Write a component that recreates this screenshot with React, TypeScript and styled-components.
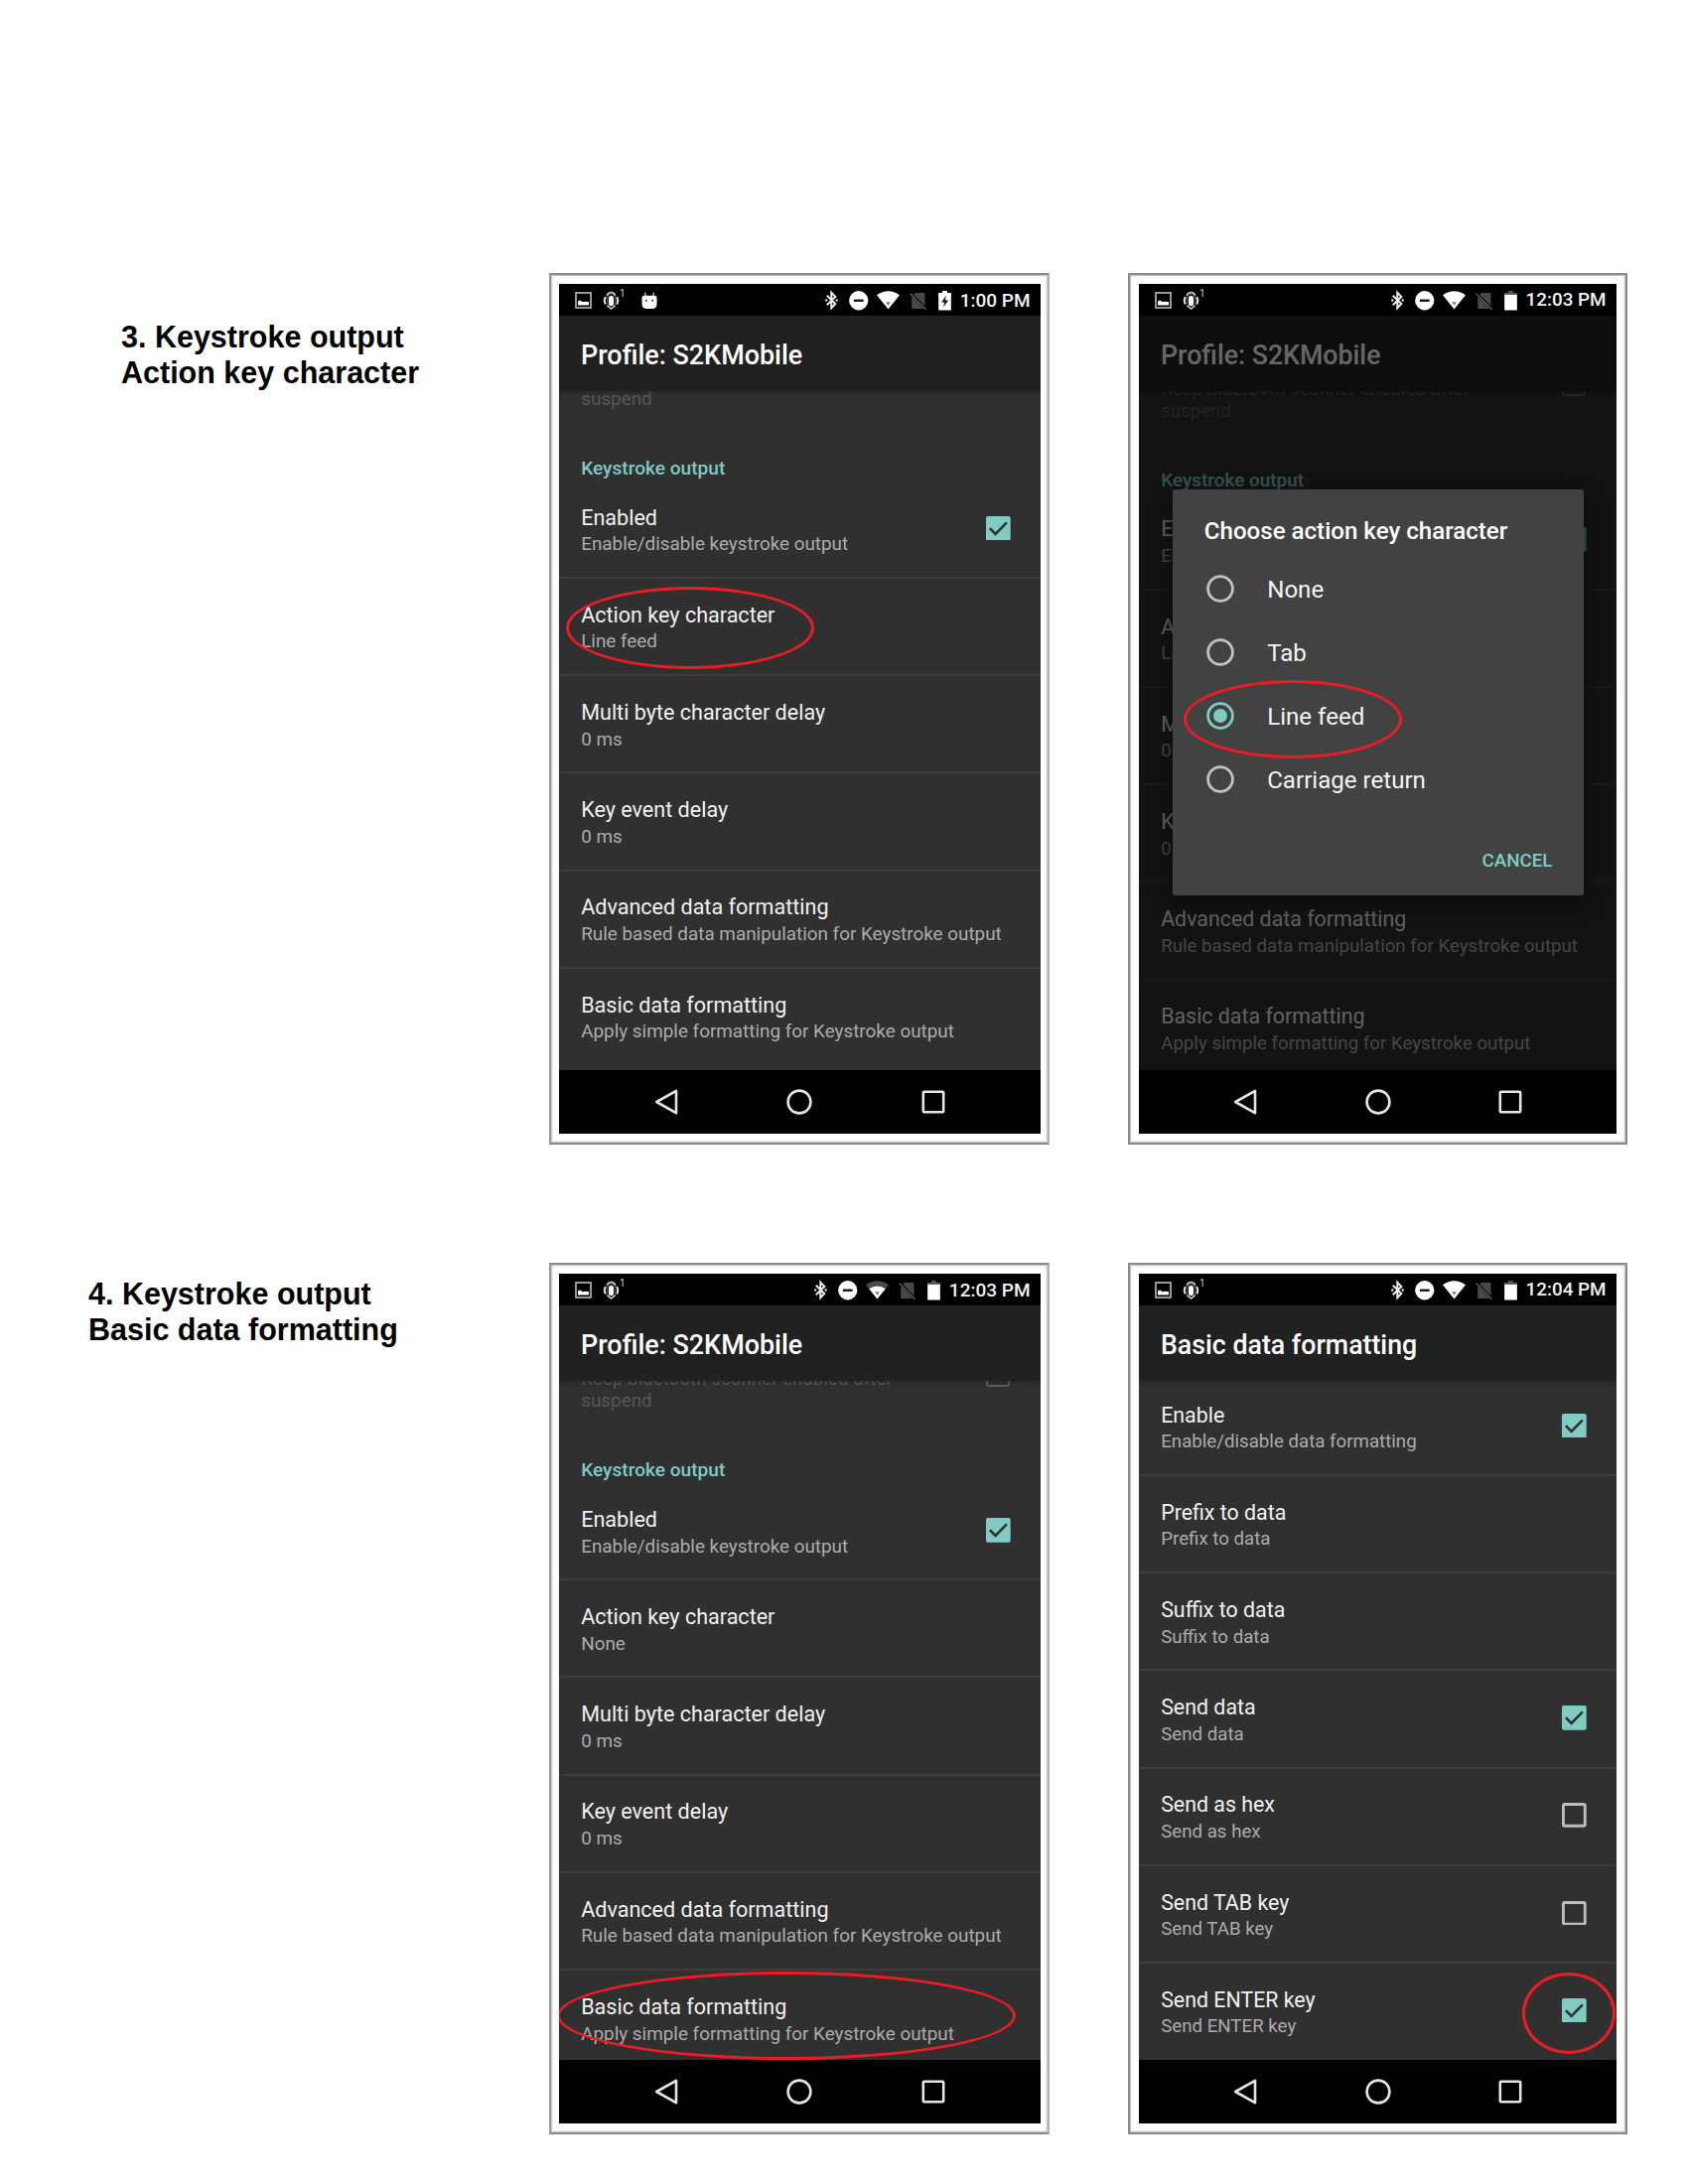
import React from "react";
import styled, { createGlobalStyle } from "styled-components";

const ACCENT = "#80cbc4";
const MARK = "#ed1c24";

const GlobalStyle = createGlobalStyle`
  *, *::before, *::after { box-sizing: border-box; }
  html, body { margin: 0; padding: 0; background: #fff; }
  body { width: 1700px; height: 2200px; overflow: hidden; }
`;

const Page = styled.main`
  display: grid;
  grid-template-columns: 553px 583px 564px;
  grid-template-rows: 997px 928px;
  width: 1700px;
  height: 2200px;
  padding-top: 275px;
  background: #fff;
`;

const Caption = styled.h2<{ $left: number; $top: number }>`
  margin: 0;
  padding: ${(p) => p.$top}px 0 0 ${(p) => p.$left}px;
  font: 700 30.5px/36px "Liberation Sans", Arial, sans-serif;
  color: #000;
  white-space: nowrap;
`;

const Frame = styled.section<{ $wide: boolean }>`
  position: relative;
  justify-self: start;
  align-self: start;
  padding: ${(p) => (p.$wide ? "9px 7px 9px 8px" : "9px 8.5px 9px 9px")};
  border: 2px solid #8a8a8a;
  border-color: ${(p) => (p.$wide ? "#8a8a8a #b4b4b4 #8a8a8a #9a9a9a" : "#8a8a8a")};
  background: #fff;
  box-shadow: inset 0 0 0 1px #c6c6c6, inset 0 0 5px rgba(0, 0, 0, 0.16);
`;

const Screen = styled.div<{ $wide: boolean }>`
  position: relative;
  display: flex;
  flex-direction: column;
  width: ${(p) => (p.$wide ? 485 : 481)}px;
  height: 856px;
  overflow: hidden;
  background: #000;
  font-family: Roboto, sans-serif;
  --k: ${(p) => (p.$wide ? 1 : 0.992)};
`;

const StatusBar = styled.div`
  display: flex;
  flex: none;
  align-items: center;
  justify-content: space-between;
  height: 32px;
  padding: 1px 10.5px 0 16px;
  color: #f2f2f2;
`;

const StatusGroup = styled.div`
  display: flex;
  align-items: center;
  height: 100%;
`;

const StatusIcon = styled.svg<{ $gap?: number }>`
  display: block;
  flex: none;
  margin-left: ${(p) => p.$gap ?? 0}px;
  overflow: visible;
`;

const Count = styled.sup`
  align-self: flex-start;
  margin: 4px 0 0 1px;
  width: 5px;
  font-size: 10px;
  line-height: 10px;
  color: #ccc;
`;

const Clock = styled.span`
  margin-left: 9px;
  font-size: calc(19px * var(--k));
  font-weight: 500;
  line-height: 31px;
`;

const Body = styled.div`
  position: relative;
  display: flex;
  flex-direction: column;
  flex: none;
  height: 760px;
  background: #303030;
`;

const Header = styled.header`
  position: relative;
  z-index: 1;
  flex: none;
  height: 76px;
  padding: 2px 22px 0;
  background: #212121;
  box-shadow: 0 1px 4px rgba(0, 0, 0, 0.3);
  color: #fff;
  font-size: calc(26.95px * var(--k));
  font-weight: 500;
  line-height: 76px;
  white-space: nowrap;
`;

const List = styled.div`
  flex: 1;
  min-height: 0;
  overflow: hidden;
`;

const ListContent = styled.div<{ $scroll: number }>`
  display: flex;
  flex-direction: column;
  margin-top: ${(p) => -p.$scroll}px;
`;

const DisabledItem = styled.div`
  display: flex;
  justify-content: space-between;
  height: 44px;
  padding: 0 31px 0 22.2px;
  color: #575757;
  font-size: calc(18.86px * var(--k));
  line-height: 22px;
`;

const DisabledBox = styled.span`
  flex: none;
  width: 24.5px;
  height: 24.5px;
  margin-top: -6px;
  border: 2.5px solid #5c5c5c;
  border-radius: 3px;
`;

const Category = styled.h3`
  margin: 46.8px 0 0;
  padding: 0 22.2px;
  color: ${ACCENT};
  font-size: calc(19.1px * var(--k));
  font-weight: 500;
  line-height: 23px;
`;

const Row = styled.div<{ $first: boolean }>`
  display: flex;
  flex: none;
  justify-content: space-between;
  height: 98.2px;
  padding: 0 30.5px 0 22.2px;
  border-top: 2px solid ${(p) => (p.$first ? "transparent" : "#3d3d3d")};
`;

const RowText = styled.div`
  padding-top: 22.8px;
  white-space: nowrap;
`;

const RowTitle = styled.div`
  color: #f1f1f1;
  font-size: calc(21.55px * var(--k));
  line-height: 27px;
`;

const RowSummary = styled.div`
  margin-top: 2.7px;
  color: #acacac;
  font-size: calc(18.86px * var(--k));
  line-height: 22px;
`;

const Check = styled.svg`
  flex: none;
  align-self: center;
  display: block;
  margin-bottom: 2px;
`;

const NavBar = styled.nav`
  display: flex;
  flex: none;
  justify-content: center;
  align-items: center;
  height: 64px;
  background: #000;
`;

const NavCell = styled.span`
  display: flex;
  justify-content: center;
  width: calc(134.8px * var(--k));
`;

const Scrim = styled.div`
  position: absolute;
  inset: 0;
  z-index: 2;
  background: rgba(0, 0, 0, 0.6);
`;

const Dialog = styled.div`
  position: absolute;
  z-index: 3;
  top: 175px;
  left: 34px;
  display: flex;
  flex-direction: column;
  width: 413.5px;
  height: 409px;
  padding: 0 31px 0 31.8px;
  border-radius: 3px;
  background: #424242;
  box-shadow: 0 8px 22px rgba(0, 0, 0, 0.5);
`;

const DialogTitle = styled.div`
  padding-top: 26px;
  color: #fff;
  font-size: 24.1px;
  font-weight: 500;
  line-height: 33px;
  white-space: nowrap;
`;

const Options = styled.div`
  display: flex;
  flex-direction: column;
  margin-top: 9.5px;
`;

const Option = styled.div`
  display: flex;
  align-items: center;
  gap: 33px;
  height: 64.2px;
  padding-left: 2.4px;
  color: #f4f4f4;
  font-size: 24.1px;
  line-height: 64px;

  svg { display: block; margin-top: -2px; }
`;

const CancelButton = styled.button`
  align-self: flex-end;
  margin: 36.500px 0 0;
  padding: 0;
  border: 0;
  background: none;
  color: ${ACCENT};
  font: 500 18.75px/24px Roboto, sans-serif;
`;

const Marker = styled.span<{ $x: number; $y: number; $w: number; $h: number }>`
  position: absolute;
  z-index: 4;
  left: ${(p) => p.$x}px;
  top: ${(p) => p.$y}px;
  width: ${(p) => p.$w}px;
  height: ${(p) => p.$h}px;
  border: 3px solid ${MARK};
  border-radius: 50%;
`;

const ImageIcon = () => (
  <StatusIcon width="17" height="17" viewBox="0 0 17 17">
    <rect x="1" y="1" width="15" height="15" fill="none" stroke="#a8a8a8" strokeWidth="1.8" />
    <path d="M3 13.6V9.6l2.2-1 2.6 1.7 2.2-.6 4 .4v3.5z" fill="#fff" />
  </StatusIcon>
);

const ScannerIcon = () => (
  <StatusIcon $gap={12} width="15" height="19" viewBox="0 0 15 19">
    <path d="M3.200 4.800Q4.500 1.500 7.500 1.500t4.300 3.300M3.400 14.600l4.100 3.400 4.100-3.400" fill="none" stroke="#d4d4d4" strokeWidth="1.500" />
    <path d="M1.900 6Q-.3 10 1.900 13.600M13.100 6q2.200 4 0 7.600" fill="none" stroke="#e4e4e4" strokeWidth="2" />
    <rect x="5" y="5" width="5" height="10.200" rx="2.200" fill="#fff" />
    <path d="M3.700 13.500V7.600Q3.700 3.500 7.500 3.500t3.800 4.100v5.900" fill="none" stroke="#8a8a8a" strokeWidth=".8" />
  </StatusIcon>
);

const DebugIcon = () => (
  <StatusIcon $gap={16.500} width="16" height="18" viewBox="0 0 16 18">
    <path d="M3.4 0.8 4.4 4M12.6 0.8 11.6 4" stroke="#ccc" strokeWidth="1.3" />
    <path d="M.5 5.8q0-2 2-2h11q2 0 2 2v6.4q0 4.8-4.8 4.8H5.3Q.5 17 .5 12.200z" fill="#fff" />
    <circle cx="4.8" cy="8.8" r="1" fill="#333" />
    <circle cx="11.200" cy="8.8" r="1" fill="#333" />
  </StatusIcon>
);

const BluetoothIcon = () => (
  <StatusIcon width="13" height="19" viewBox="0 0 13 19">
    <path d="M1.800 4.800 10.300 13 6.300 17.200V1.800L10.300 5.900 1.800 14.200" fill="none" stroke="#eee" strokeWidth="2" />
    <circle cx="1.300" cy="9.500" r="1.200" fill="#ddd" />
    <circle cx="11.700" cy="9.500" r="1.200" fill="#ddd" />
  </StatusIcon>
);

const DoNotDisturbIcon = () => (
  <StatusIcon $gap={11} width="19.500" height="19.500" viewBox="0 0 20 20">
    <circle cx="10" cy="10" r="9.900" fill="#fff" />
    <rect x="5" y="8.800" width="10" height="2.400" fill="#111" />
  </StatusIcon>
);

const WifiIcon = ({ weak }: { weak: boolean }) => (
  <StatusIcon $gap={8.5} width="23" height="19" viewBox="0 0 23 19">
    <path d="M0 4.300Q11.500-3.700 23 4.300L11.500 18.600z" fill={weak ? "#4a4a4a" : "#fff"} />
    {weak && <path d="M3.200 8.300Q11.500 2.700 19.800 8.300L11.500 18.600z" fill="#fff" />}
    <path d="M9.200 11.200h4.600L11.500 14.800z" fill="#777" />
  </StatusIcon>
);

const NoSimIcon = () => (
  <StatusIcon $gap={11} width="16" height="18" viewBox="0 0 16 18">
    <path d="M5 1H14.500v13.200L3.200 2.800z" fill="#484848" />
    <path d="M1.200 4.800 13.200 17H1.200z" fill="#484848" />
    <path d="M-.3 1.800 15.500 17.800" stroke="#5c5c5c" strokeWidth="1.500" />
  </StatusIcon>
);

const BatteryIcon = ({ charging }: { charging: boolean }) => (
  <StatusIcon $gap={12} width="13" height="19.500" viewBox="0 0 13 20">
    <path d="M4 0h5v2h4v4H0V2h4z" fill={charging ? "#fff" : "#555"} />
    <rect x="0" y={charging ? 3 : 4} width="13" height={charging ? 17 : 16} fill="#fff" />
    {charging && <path d="M8 4.500 3 11.800h3.200L5 17l5.200-7.200H6.800z" fill="#111" />}
  </StatusIcon>
);

const Tick = () => (
  <Check width="24.700" height="24.700" viewBox="0 0 24 24">
    <rect width="24" height="24" rx="2" fill={ACCENT} />
    <path d="M3.800 11.700 9.300 17.300 20.300 6.200" fill="none" stroke="#303030" strokeWidth="2.500" />
  </Check>
);

const EmptyBox = () => (
  <Check width="24.700" height="24.700" viewBox="0 0 24 24">
    <rect x="1.400" y="1.400" width="21.200" height="21.200" rx="1.500" fill="none" stroke="#bdbdbd" strokeWidth="2.800" />
  </Check>
);

const Radio = ({ on }: { on: boolean }) => (
  <svg width="28" height="28" viewBox="0 0 28 28">
    <circle cx="14" cy="14" r="12.400" fill="none" stroke={on ? ACCENT : "#c2c2c2"} strokeWidth="2.800" />
    {on && <circle cx="14" cy="14" r="7" fill={ACCENT} />}
  </svg>
);

const Nav = () => (
  <NavBar>
    <NavCell>
      <svg width="24" height="26" viewBox="0 0 24 26">
        <path d="M22 1.800V24.200L2.200 13z" fill="none" stroke="#e4e4e4" strokeWidth="2.600" strokeLinejoin="round" />
      </svg>
    </NavCell>
    <NavCell>
      <svg width="26" height="26" viewBox="0 0 26 26">
        <circle cx="13" cy="13" r="11.400" fill="none" stroke="#e4e4e4" strokeWidth="2.600" />
      </svg>
    </NavCell>
    <NavCell>
      <svg width="24" height="24" viewBox="0 0 24 24">
        <rect x="1.800" y="1.800" width="20.400" height="20.400" rx="1" fill="none" stroke="#e4e4e4" strokeWidth="2.600" />
      </svg>
    </NavCell>
  </NavBar>
);

type Item = { title: string; summary: string; checked?: boolean };

type PhoneProps = {
  wide?: boolean;
  time: string;
  title: string;
  items: Item[];
  scroll: number;
  category?: string;
  debug?: boolean;
  charging?: boolean;
  weakWifi?: boolean;
  overlay?: React.ReactNode;
  marker: [number, number, number, number];
};

const Phone = ({
  wide = false, time, title, items, scroll, category, debug = false,
  charging = false, weakWifi = false, overlay, marker: [x, y, w, h],
}: PhoneProps) => (
  <Frame $wide={wide}>
    <Screen $wide={wide}>
      <StatusBar>
        <StatusGroup>
          <ImageIcon />
          <ScannerIcon />
          <Count>1</Count>
          {debug && <DebugIcon />}
        </StatusGroup>
        <StatusGroup>
          <BluetoothIcon />
          <DoNotDisturbIcon />
          <WifiIcon weak={weakWifi} />
          <NoSimIcon />
          <BatteryIcon charging={charging} />
          <Clock>{time}</Clock>
        </StatusGroup>
      </StatusBar>
      <Body>
        <Header>{title}</Header>
        <List>
          <ListContent $scroll={scroll}>
            {category && (
              <>
                <DisabledItem>
                  <span>Keep bluetooth scanner enabled after<br />suspend</span>
                  <DisabledBox />
                </DisabledItem>
                <Category>{category}</Category>
              </>
            )}
            {items.map((item, i) => (
              <Row key={item.title} $first={i === 0}>
                <RowText>
                  <RowTitle>{item.title}</RowTitle>
                  <RowSummary>{item.summary}</RowSummary>
                </RowText>
                {item.checked === true && <Tick />}
                {item.checked === false && <EmptyBox />}
              </Row>
            ))}
          </ListContent>
        </List>
        {overlay}
      </Body>
      <Nav />
      <Marker $x={x} $y={y} $w={w} $h={h} />
    </Screen>
  </Frame>
);

const keystrokeItems = (action: string): Item[] => [
  { title: "Enabled", summary: "Enable/disable keystroke output", checked: true },
  { title: "Action key character", summary: action },
  { title: "Multi byte character delay", summary: "0 ms" },
  { title: "Key event delay", summary: "0 ms" },
  { title: "Advanced data formatting", summary: "Rule based data manipulation for Keystroke output" },
  { title: "Basic data formatting", summary: "Apply simple formatting for Keystroke output" },
];

const formattingItems: Item[] = [
  { title: "Enable", summary: "Enable/disable data formatting", checked: true },
  { title: "Prefix to data", summary: "Prefix to data" },
  { title: "Suffix to data", summary: "Suffix to data" },
  { title: "Send data", summary: "Send data", checked: true },
  { title: "Send as hex", summary: "Send as hex", checked: false },
  { title: "Send TAB key", summary: "Send TAB key", checked: false },
  { title: "Send ENTER key", summary: "Send ENTER key", checked: true },
];

const ActionKeyDialog = () => (
  <>
    <Scrim />
    <Dialog>
      <DialogTitle>Choose action key character</DialogTitle>
      <Options>
        {["None", "Tab", "Line feed", "Carriage return"].map((label) => (
          <Option key={label}>
            <Radio on={label === "Line feed"} />
            <span>{label}</span>
          </Option>
        ))}
      </Options>
      <CancelButton>CANCEL</CancelButton>
    </Dialog>
  </>
);

export default function App() {
  return (
    <>
      <GlobalStyle />
      <Page>
        <Caption $left={122} $top={46.4}>
          3. Keystroke output<br />Action key character
        </Caption>
        <Phone
          wide debug charging time="1:00 PM" title="Profile: S2KMobile" category="Keystroke output"
          items={keystrokeItems("Line feed")} scroll={25} marker={[6.5, 305, 250.5, 83]}
        />
        <Phone
          time="12:03 PM" title="Profile: S2KMobile" category="Keystroke output"
          items={keystrokeItems("Line feed")} scroll={13.2} overlay={<ActionKeyDialog />}
          marker={[45, 399, 220, 79]}
        />
        <Caption $left={89} $top={13.4}>
          4. Keystroke output<br />Basic data formatting
        </Caption>
        <Phone
          wide weakWifi time="12:03 PM" title="Profile: S2KMobile" category="Keystroke output"
          items={keystrokeItems("None")} scroll={12.7} marker={[-2, 703, 461.5, 89]}
        />
        <Phone
          time="12:04 PM" title="Basic data formatting"
          items={formattingItems} scroll={4.2} marker={[386, 704, 93.5, 82]}
        />
      </Page>
    </>
  );
}
